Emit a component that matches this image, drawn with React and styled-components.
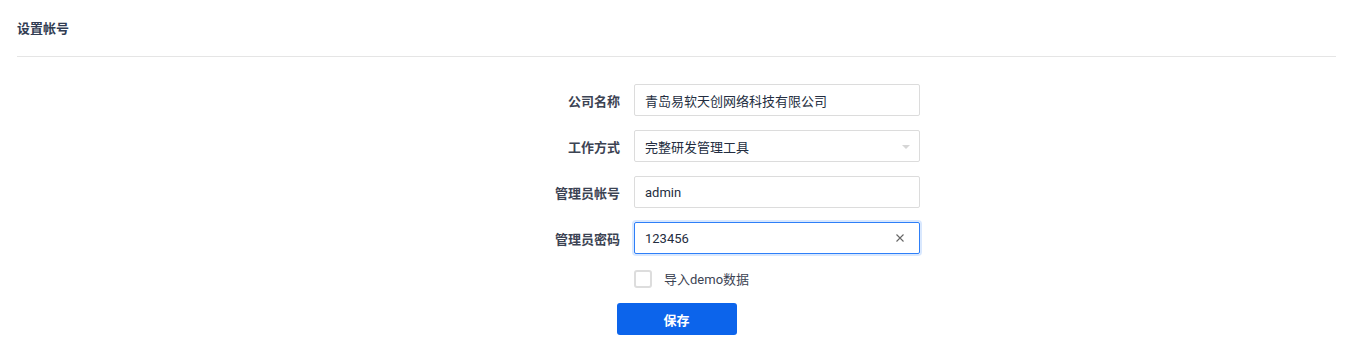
import React from "react";
import styled, { createGlobalStyle } from "styled-components";

const GlobalStyle = createGlobalStyle`
  body {
    margin: 0;
    background: #ffffff;
    font-family: Roboto, "Noto Sans CJK SC", sans-serif;
    font-size: 13px;
    color: #313c52;
  }
`;

const Page = styled.div`
  padding: 0 16px 0 17px;
`;

const Header = styled.div`
  height: 57px;
  display: flex;
  align-items: center;
  border-bottom: 1px solid #e5e5e5;
  font-weight: 700;
  font-size: 13px;
  color: #313c52;
  padding-bottom: 2px;
  box-sizing: border-box;
`;

const Form = styled.div`
  display: grid;
  grid-template-columns: 603px 286px;
  column-gap: 14px;
  row-gap: 14px;
  padding-top: 27px;
  align-items: center;
`;

const Label = styled.label`
  text-align: right;
  font-weight: 700;
  color: #3c4353;
  font-size: 13px;
`;

const Field = styled.div`
  position: relative;
  height: 32px;
  box-sizing: border-box;
  border: 1px solid ${(p) => (p.$focus ? "#2e7ff8" : "#dcdcdc")};
  border-radius: 2px;
  box-shadow: ${(p) => (p.$focus ? "0 0 0 2px rgba(46,127,248,0.18)" : "none")};
  display: flex;
  align-items: center;
  padding: 0 10px;
  color: #232d40;
  font-size: 13px;
`;

const Arrow = styled.span`
  position: absolute;
  right: 9px;
  top: 14px;
  width: 0;
  height: 0;
  border-left: 4px solid transparent;
  border-right: 4px solid transparent;
  border-top: 4px solid #d6d6d6;
`;

const Clear = styled.span`
  position: absolute;
  right: 13px;
  top: 9px;
  width: 12px;
  height: 12px;
`;

const CheckRow = styled.div`
  grid-column: 2;
  display: flex;
  align-items: center;
  gap: 12px;
  margin-top: 1px;
  color: #3c4353;
`;

const Box = styled.span`
  width: 18px;
  height: 18px;
  box-sizing: border-box;
  border: 2px solid #dddddd;
  border-radius: 3px;
`;

const Actions = styled.div`
  display: flex;
  justify-content: center;
  padding-top: 15px;
`;

const SaveButton = styled.button`
  width: 120px;
  height: 32px;
  background: #0c64eb;
  border: none;
  border-radius: 3px;
  color: #ffffff;
  font-weight: 700;
  font-size: 13px;
  font-family: Roboto, "Noto Sans CJK SC", sans-serif;
  cursor: pointer;
`;

export default function App() {
  return (
    <Page>
      <GlobalStyle />
      <Header>设置帐号</Header>
      <Form>
        <Label>公司名称</Label>
        <Field>青岛易软天创网络科技有限公司</Field>
        <Label>工作方式</Label>
        <Field>
          完整研发管理工具
          <Arrow />
        </Field>
        <Label>管理员帐号</Label>
        <Field>admin</Field>
        <Label>管理员密码</Label>
        <Field $focus>
          123456
          <Clear>
            <svg width="12" height="12" viewBox="0 0 12 12">
              <path d="M2.5 2.5 L9.5 9.5 M9.5 2.5 L2.5 9.5" stroke="#666" strokeWidth="1.1" />
            </svg>
          </Clear>
        </Field>
        <CheckRow>
          <Box />
          导入demo数据
        </CheckRow>
      </Form>
      <Actions>
        <SaveButton>保存</SaveButton>
      </Actions>
    </Page>
  );
}
